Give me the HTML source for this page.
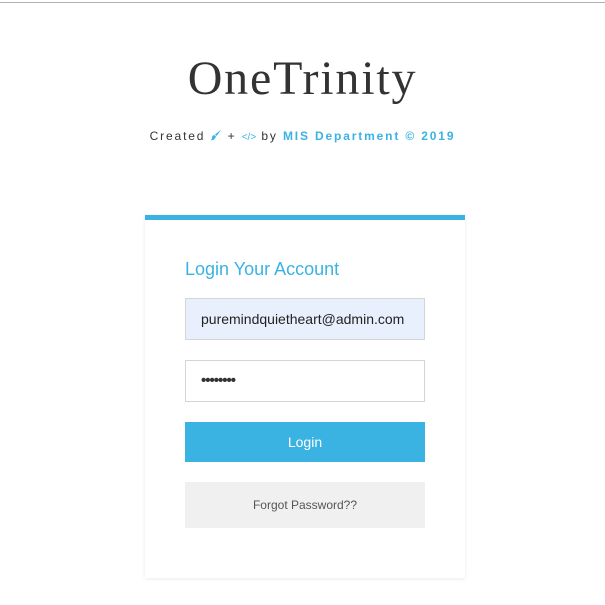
<!DOCTYPE html>
<html><head><style>
*{margin:0;padding:0;box-sizing:border-box}
body{width:605px;height:605px;background:#fff;position:relative;font-family:"Liberation Sans",sans-serif;overflow:hidden}
.topline{position:absolute;left:0;top:2px;width:605px;height:1px;background:#b0b0b0}
h1{position:absolute;left:0;width:605px;top:51px;text-align:center;font-family:"Liberation Serif",serif;font-weight:normal;font-size:48px;color:#333;letter-spacing:1.8px;line-height:56px}
.sub{position:absolute;left:0;width:605px;top:128px;text-align:center;font-size:12px;letter-spacing:1.85px;color:#333;line-height:16px}
.b{color:#3ab3e3;font-weight:bold}
.card{position:absolute;left:145px;top:215px;width:320px;height:363px;background:#fff;border-top:5px solid #3ab3e3;box-shadow:0 1px 4px rgba(0,0,0,.08)}
.h{position:absolute;left:40px;top:39px;font-size:18px;color:#3ab3e3}
.in{position:absolute;left:40px;width:240px;height:42px;border:1px solid #d5d5d5;font-size:14px;color:#222;padding-left:15px;line-height:40px}
.btn{position:absolute;left:40px;width:240px;text-align:center}
</style></head><body>
<div class="topline"></div>
<h1>OneTrinity</h1>
<div class="sub">Created <svg width="12" height="12" viewBox="0 0 12 12" style="vertical-align:-1px"><path d="M11.5 0.5 L6.5 7 L5 5.5 Z" fill="#3ab3e3"/><path d="M4.5 6 Q2 6.5 2 9 Q1.8 10.8 0.3 11.2 Q4.5 11.8 6 7.5 Z" fill="#3ab3e3"/></svg> + <span style="color:#3ab3e3;font-size:10px;letter-spacing:0">&lt;/&gt;</span> by <span class="b">MIS Department © 2019</span></div>
<div class="card">
<div class="h">Login Your Account</div>
<div class="in" style="top:78px;background:#e8f0fe">puremindquietheart@admin.com</div>
<div class="in" style="top:140px;background:#fff;font-size:15px;font-weight:bold;letter-spacing:-1px;color:#333">••••••••</div>
<div class="btn" style="top:202px;height:40px;background:#3ab3e3;color:#fff;font-size:14px;line-height:40px">Login</div>
<div class="btn" style="top:262px;height:46px;background:#f0f0f0;color:#555;font-size:12px;line-height:46px">Forgot Password??</div>
</div>
</body></html>
